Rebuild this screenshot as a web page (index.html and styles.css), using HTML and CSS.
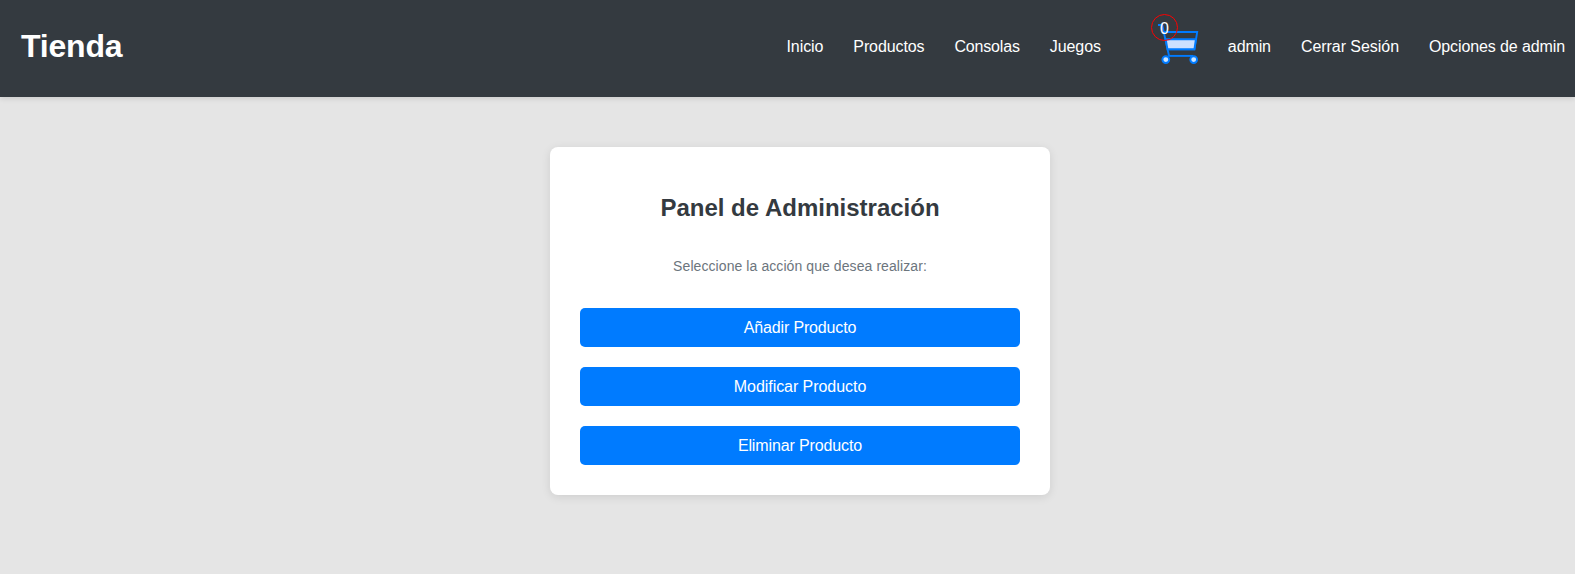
FILE: index.html
```html
<!DOCTYPE html>
<html lang="es">
<head>
<meta charset="utf-8">
<title>Tienda</title>
<link rel="stylesheet" href="styles.css">
</head>
<body>
<header class="header">
  <h1 class="logo">Tienda</h1>
  <nav class="nav">
    <a class="link inicio">Inicio</a>
    <a class="link productos">Productos</a>
    <a class="link consolas">Consolas</a>
    <a class="link juegos">Juegos</a>
    <a class="cart">
      <svg class="cart-icon" width="42" height="44" viewBox="18 17 42 44" fill="none" stroke="#007bff" stroke-width="1.9">
        <path d="M18 20H22.2L29 50.8"/>
        <path d="M24 27H57.2L54.4 44.3H27.3"/>
        <path d="M25.7 34.2H55.9L54.4 44.3H27.5Z" fill="#cce0ff"/>
        <path d="M28.3 50.9H53"/>
        <circle cx="25.8" cy="54.6" r="3.4" fill="#cce5ff"/>
        <circle cx="53.7" cy="54.6" r="3.4" fill="#cce5ff"/>
      </svg>
      <span class="badge">0</span>
    </a>
    <a class="link user">admin</a>
    <a class="link logout">Cerrar Sesión</a>
    <a class="link options">Opciones de admin</a>
  </nav>
</header>
<main class="main">
  <section class="card">
    <h2 class="title">Panel de Administración</h2>
    <p class="hint">Seleccione la acción que desea realizar:</p>
    <div class="actions">
      <a class="button add">Añadir Producto</a>
      <a class="button edit">Modificar Producto</a>
      <a class="button remove">Eliminar Producto</a>
    </div>
  </section>
</main>
</body>
</html>
```
FILE: styles.css
```css
* { box-sizing: border-box; }
body {
  min-height: 574px;
  margin: 0;
  background: #e5e5e5;
  font-family: "Liberation Sans", Arial, sans-serif;
  font-size: 16px;
}
.header {
  display: flex;
  justify-content: space-between;
  height: 97px;
  padding: 0 10px 0 20px;
  background: #343a40;
  color: #fff;
  box-shadow: 0 2px 5px rgba(0, 0, 0, .1);
}
.logo { margin: 28px 0 0 1px; font-size: 32px; line-height: 37px; letter-spacing: -.2px; }
.nav { display: flex; align-items: flex-start; gap: 30px; padding-top: 37px; line-height: 19px; white-space: nowrap; }
.inicio { letter-spacing: -.08px; }
.productos { letter-spacing: -.11px; }
.consolas { letter-spacing: -.16px; }
.juegos { letter-spacing: -.1px; }
.user { letter-spacing: -.1px; }
.logout { letter-spacing: -.05px; }
.options { letter-spacing: -.11px; }
.cart { position: relative; width: 42px; margin: -15px -2px 0 27px; }
.cart-icon { display: block; }
.badge {
  position: absolute;
  left: -7px;
  top: -8px;
  width: 27px;
  height: 27px;
  border: 1px solid #f00;
  border-radius: 50%;
  line-height: 27px;
  text-align: center;
}
.main { padding: 50px 0 0 25px; }
.card {
  width: 500px;
  height: 348px;
  margin: 0 auto;
  padding: 47px 30px 30px;
  background: #fff;
  border-radius: 8px;
  box-shadow: 0 2px 10px rgba(0, 0, 0, .1);
  text-align: center;
}
.title { margin: 0; color: #343a40; font-size: 24px; line-height: 28px; }
.hint { margin: 36px 0 34px; color: #6c757d; font-size: 14px; line-height: 16px; letter-spacing: .08px; }
.actions { display: flex; flex-direction: column; gap: 20px; }
.button { height: 39px; border-radius: 5px; background: #007bff; color: #fff; line-height: 39px; }
.add { letter-spacing: -.16px; }
.edit { letter-spacing: -.05px; }
.remove { letter-spacing: -.12px; }
```
